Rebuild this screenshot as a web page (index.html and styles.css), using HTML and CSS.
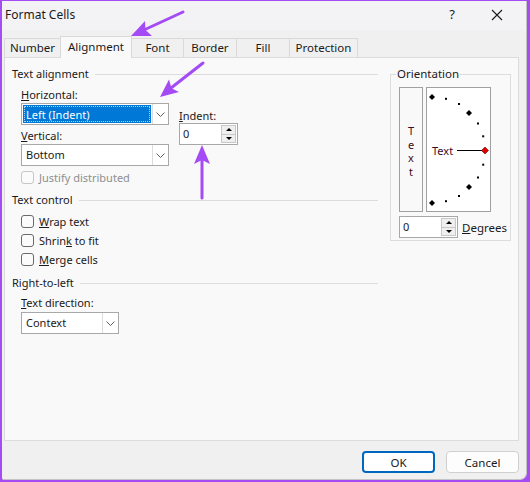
FILE: index.html
```html
<!DOCTYPE html>
<html>
<head>
<meta charset="utf-8">
<title>Format Cells</title>
<link rel="stylesheet" href="styles.css">
</head>
<body>
<div class="window">
  <div class="titlebar">
    <span class="title">Format Cells</span>
    <span class="help">?</span>
    <svg class="close" width="12" height="12" viewBox="0 0 12 12"><path d="M1 1L11 11M11 1L1 11" stroke="#1a1a1a" stroke-width="1.1" fill="none"/></svg>
  </div>
  <div class="tabs">
    <div class="tab t-number">Number</div>
    <div class="tab t-align active">Alignment</div>
    <div class="tab t-font">Font</div>
    <div class="tab t-border">Border</div>
    <div class="tab t-fill">Fill</div>
    <div class="tab t-prot">Protection</div>
  </div>
  <div class="panel">
    <div class="leftcol">
      <div class="gtitle"><span>Text alignment</span><i></i></div>
      <div class="galign">
        <div class="hvcol">
          <div class="lbl"><u>H</u>orizontal:</div>
          <div class="select sel-wide focused">
            <div class="val"><span class="hl"><span class="focusrect">Left (Indent)</span></span></div>
            <div class="drop"><svg width="9" height="5" viewBox="0 0 9 5"><path d="M0.5 0.5L4.5 4.5L8.5 0.5" stroke="#606060" fill="none"/></svg></div>
          </div>
          <div class="lbl lbl-v"><u>V</u>ertical:</div>
          <div class="select sel-wide sel-v">
            <div class="val">Bottom</div>
            <div class="drop"><svg width="9" height="5" viewBox="0 0 9 5"><path d="M0.5 0.5L4.5 4.5L8.5 0.5" stroke="#606060" fill="none"/></svg></div>
          </div>
        </div>
        <div class="indentcol">
          <div class="lbl"><u>I</u>ndent:</div>
          <div class="spin spin-indent">
            <div class="spinval">0</div>
            <div class="spinbtns"><b class="up"></b><b class="dn"></b></div>
          </div>
        </div>
      </div>
      <div class="check disabled first"><span class="box"></span>Justify distributed</div>
      <div class="gtitle gt-control"><span>Text control</span><i></i></div>
      <div class="checks">
        <div class="check"><span class="box"></span><span><u>W</u>rap text</span></div>
        <div class="check"><span class="box"></span><span>Shrin<u>k</u> to fit</span></div>
        <div class="check"><span class="box"></span><span><u>M</u>erge cells</span></div>
      </div>
      <div class="gtitle gt-rtl"><span>Right-to-left</span><i></i></div>
      <div class="lbl lbl-dir"><u>T</u>ext direction:</div>
      <div class="select sel-ctx">
        <div class="val">Context</div>
        <div class="drop"><svg width="9" height="5" viewBox="0 0 9 5"><path d="M0.5 0.5L4.5 4.5L8.5 0.5" stroke="#606060" fill="none"/></svg></div>
      </div>
    </div>
    <fieldset class="orient">
      <legend>Orientation</legend>
      <div class="orow">
        <div class="vtext"><span>T</span><span>e</span><span>x</span><span>t</span></div>
        <div class="dial">
          <svg width="63" height="123" viewBox="0 0 63 123">
            <g fill="#000">
              <path d="M5 6L8 9L5 12L2 9Z"/>
              <rect x="18" y="9.8" width="2" height="2"/>
              <rect x="31" y="15" width="2" height="2"/>
              <path d="M42 22L45 25L42 28L39 25Z"/>
              <rect x="50" y="34.5" width="2" height="2"/>
              <rect x="55.2" y="47.3" width="2" height="2"/>
              <rect x="55.2" y="75.7" width="2" height="2"/>
              <rect x="50" y="88.5" width="2" height="2"/>
              <path d="M42 96L45 99L42 102L39 99Z"/>
              <rect x="31" y="107" width="2" height="2"/>
              <rect x="18" y="112.2" width="2" height="2"/>
              <path d="M5 112L8 115L5 118L2 115Z"/>
            </g>
            <path d="M30 62.5H55" stroke="#000" stroke-width="1"/>
            <path d="M58 59L61.5 62.5L58 66L54.5 62.5Z" fill="#e00000" stroke="#600000" stroke-width="0.6"/>
            <text x="5" y="66.5" class="dialtext">Text</text>
          </svg>
        </div>
      </div>
      <div class="degrow">
        <div class="spin spin-deg">
          <div class="spinval">0</div>
          <div class="spinbtns"><b class="up"></b><b class="dn"></b></div>
        </div>
        <span class="deglbl"><u>D</u>egrees</span>
      </div>
    </fieldset>
  </div>
  <div class="buttons">
    <button class="btn ok">OK</button>
    <button class="btn cancel">Cancel</button>
  </div>
</div>
<svg class="arrows" width="530" height="482" viewBox="0 0 530 482">
  <g stroke="#a54bf5" stroke-width="3" stroke-linecap="round" fill="none">
    <path d="M183 12L145 29.5"/>
    <path d="M203 63L171 88"/>
    <path d="M202 198V160"/>
  </g>
  <g fill="#a54bf5">
    <path d="M131 36L145 21L145.5 30L152 36Z"/>
    <path d="M160 97L169 79.5L171.5 88.3L179 92Z"/>
    <path d="M202 145L194 164L202 160L210 164Z"/>
  </g>
</svg>
</body>
</html>
```

FILE: styles.css
```css
* { box-sizing: border-box; }
html, body { margin: 0; padding: 0; }
body {
  width: 530px;
  height: 482px;
  background: #a64cf4;
  font-family: "Noto Sans", "Open Sans", sans-serif;
  font-size: 11px;
  color: #1a1a1a;
  overflow: hidden;
  position: relative;
}
.window {
  margin-left: 2px;
  margin-top: 1px;
  width: 525px;
  height: 479px;
  background: #f0f0f0;
  border-right: 1px solid #c4c4c4;
  border-bottom: 1px solid #c4c4c4;
  border-bottom-right-radius: 7px;
  border-bottom-left-radius: 2px;
}
.titlebar {
  height: 29px;
  background: #f3f3f6;
  display: flex;
  align-items: center;
  padding-left: 3px;
}
.title { font-size: 12px; line-height: 16px; margin-top: -2px; }
.help { margin-left: auto; font-size: 13px; margin-top: -3px; }
.close { margin-left: 36px; margin-right: 23px; margin-top: -2px; }

.tabs {
  margin-top: 6px;
  height: 21px;
  padding-left: 2px;
  display: flex;
  align-items: flex-end;
}
.tab {
  height: 19px;
  border-top: 1px solid #d9d9d9;
  border-left: 1px solid #d9d9d9;
  background: #f0f0f0;
  text-align: center;
  line-height: 18px;
  font-size: 11.5px;
}
.t-number { width: 56px; }
.t-align { width: 72px; }
.t-font { width: 52px; }
.t-border { width: 53px; }
.t-fill { width: 53px; }
.t-prot { width: 69px; border-right: 1px solid #d9d9d9; }
.tab.active {
  height: 22px;
  margin-bottom: -1px;
  background: #f9f9f9;
  position: relative;
  z-index: 1;
  line-height: 20px;
  border-right: 1px solid #d9d9d9;
  margin-right: -1px;
}
.panel {
  margin-left: 2px;
  width: 515px;
  height: 384px;
  background: #f9f9f9;
  border: 1px solid #dcdcdc;
  display: flex;
  align-items: flex-start;
  padding: 8px 0 0 7px;
}
.leftcol { width: 366px; }
.gtitle {
  display: flex;
  align-items: center;
  height: 16px;
  line-height: 16px;
}
.gtitle i {
  flex: 1;
  height: 1px;
  background: #dddddd;
  margin-left: 6px;
  margin-top: 1px;
}
.galign {
  display: flex;
  margin-top: 5px;
  padding-left: 9px;
}
.lbl { line-height: 15px; height: 15px; }
.select {
  display: flex;
  height: 22px;
  border: 1px solid #a8a8a8;
  background: #fff;
}
.sel-wide { width: 148px; margin-top: 1px; }
.sel-v { margin-top: 1px; }
.lbl-v { margin-top: 3px; }
.select .val {
  flex: 1;
  line-height: 20px;
  padding-left: 4px;
}
.select .drop {
  width: 16px;
  border-left: 1px solid #dcdcdc;
  display: flex;
  align-items: center;
  justify-content: center;
}
.focused .val { padding: 1px; }
.hl {
  display: block;
  height: 18px;
  background: #0078d7;
  color: #fff;
  padding: 1px;
}
.focusrect {
  display: block;
  height: 16px;
  line-height: 15px;
  border: 1px dotted #b0d4f5;
  padding-left: 1px;
}
.indentcol { margin-left: 10px; padding-top: 21px; }
.spin {
  display: flex;
  height: 22px;
  border: 1px solid #a8a8a8;
  background: #fff;
  padding: 1px;
}
.spin-indent { width: 59px; }
.spinval { flex: 1; line-height: 18px; padding-left: 2px; }
.spinbtns {
  width: 15px;
  display: flex;
  flex-direction: column;
}
.spinbtns b {
  flex: 1;
  background: #efefef;
  border: 1px solid #c8c8c8;
  display: flex;
  align-items: center;
  justify-content: center;
}
.spinbtns b + b { border-top: none; }
.spinbtns b.up::after {
  content: "";
  border-left: 3px solid transparent;
  border-right: 3px solid transparent;
  border-bottom: 3px solid #000;
}
.spinbtns b.dn::after {
  content: "";
  border-left: 3px solid transparent;
  border-right: 3px solid transparent;
  border-top: 3px solid #000;
}
.check {
  display: flex;
  align-items: center;
  height: 19px;
  padding-left: 9px;
}
.check .box {
  width: 13px;
  height: 13px;
  border: 1px solid #6a6a6a;
  border-radius: 3px;
  background: #fbfbfb;
  margin-right: 5px;
}
.check.first { margin-top: 2px; height: 19px; }
.check.disabled { color: #8f8f8f; }
.check.disabled .box { border-color: #c6c6c6; }
.gt-control { margin-top: 5px; }
.checks { margin-top: 4px; }
.gt-rtl { margin-top: 6px; }
.lbl-dir { margin-top: 4px; padding-left: 9px; }
.sel-ctx { width: 98px; margin-top: 2px; margin-left: 9px; }

.orient {
  margin: 0 0 0 12px;
  width: 121px;
  border: 1px solid #dddddd;
  padding: 5px 0 2px 8px;
  min-width: 0;
}
.orient legend {
  padding: 0 1px;
  margin-left: -3px;
  line-height: 16px;
  font-size: 11.5px;
}
.orow { display: flex; gap: 3px; }
.vtext {
  width: 24px;
  height: 125px;
  border: 1px solid #a0a0a0;
  background: #f9f9f9;
  display: flex;
  flex-direction: column;
  align-items: center;
  padding-top: 36px;
  color: #3d0b22;
  line-height: 13.5px;
}
.dial {
  width: 65px;
  height: 125px;
  border: 1px solid #a0a0a0;
  background: #fff;
}
.dial svg { display: block; }
.dialtext { font-family: "Noto Sans", sans-serif; font-size: 11px; fill: #3d0b22; }
.degrow { display: flex; align-items: center; margin-top: 4px; }
.spin-deg { width: 59px; }
.deglbl { margin-left: 4px; font-size: 11.5px; }

.buttons {
  display: flex;
  justify-content: flex-end;
  gap: 11px;
  padding-right: 7px;
  margin-top: 10px;
}
.btn {
  width: 73px;
  height: 22px;
  font-family: inherit;
  font-size: 11.5px;
  color: #1a1a1a;
  background: #fdfdfd;
  border: 1px solid #d0d0d0;
  border-radius: 4px;
  padding: 0;
}
.btn.ok { border: 2px solid #0067c0; background: #fff; }
.arrows { position: absolute; left: 0; top: 0; pointer-events: none; }
```
